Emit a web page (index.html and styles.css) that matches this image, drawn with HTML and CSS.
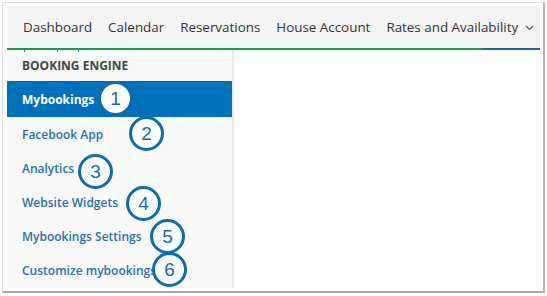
FILE: index.html
```html
<!DOCTYPE html>
<html>
<head>
<meta charset="utf-8">
<link rel="stylesheet" href="styles.css">
</head>
<body>
<div class="frame">
  <nav class="topnav">
    <a class="nav-item">Dashboard</a>
    <a class="nav-item">Calendar</a>
    <a class="nav-item">Reservations</a>
    <a class="nav-item">House Account</a>
    <a class="nav-item">Rates and Availability
      <svg class="chev" width="9" height="6" viewBox="0 0 9 6"><path d="M1 1 L4.5 4.5 L8 1" fill="none" stroke="#555" stroke-width="1.1"/></svg>
    </a>
  </nav>
  <div class="navline"><div class="line-green"></div><div class="line-blue"></div></div>
  <div class="main">
    <aside class="sidebar">
      <div class="cutoff"><span></span><span></span><span></span></div>
      <div class="side-heading">BOOKING ENGINE</div>
      <a class="side-item active">Mybookings</a>
      <a class="side-item">Facebook App</a>
      <a class="side-item">Analytics</a>
      <a class="side-item">Website Widgets</a>
      <a class="side-item">Mybookings Settings</a>
      <a class="side-item">Customize mybookings</a>
    </aside>
    <section class="content"></section>
    <div class="marker m1">1</div>
    <div class="marker m2">2</div>
    <div class="marker m3">3</div>
    <div class="marker m4">4</div>
    <div class="marker m5">5</div>
    <div class="marker m6">6</div>
  </div>
</div>
</body>
</html>
```

FILE: styles.css
```css
* { box-sizing: border-box; }
html, body { margin: 0; padding: 0; background: #fff; }
body { font-family: "Open Sans", "Liberation Sans", sans-serif; }

.frame {
  margin: 2px 0 0 2px;
  width: 543px;
  height: 291px;
  border-left: 1px solid #dcdcdc;
  border-top: 1px solid #e2e2e2;
  border-right: 2px solid #b4b4b4;
  border-bottom: 2px solid #a8a8a8;
  padding: 3px 3px 3px 4px;
  display: flex;
  flex-direction: column;
}

.topnav {
  height: 42px;
  background: #f4f4f4;
  display: flex;
  align-items: center;
  gap: 16px;
  padding-left: 16px;
  font-size: 13.4px;
  color: #333;
}
.nav-item { white-space: nowrap; display: flex; align-items: center; }
.chev { margin-left: 7px; margin-top: 1px; }

.navline { display: flex; height: 2px; }
.line-green { flex: 1; background: #1e9a4b; }
.line-blue { width: 57px; background: #1f63a6; }

.main {
  flex: 1;
  display: flex;
  position: relative;
}
.sidebar {
  width: 227px;
  background: #f9f9f9;
  border-right: 2px solid #e6e9ee;
  display: flex;
  flex-direction: column;
}
.cutoff { height: 2px; position: relative; }
.cutoff span { position: absolute; top: 0; width: 1px; height: 2px; background: #3d7fc0; }
.cutoff span:nth-child(1) { left: 17px; }
.cutoff span:nth-child(2) { left: 50px; }
.cutoff span:nth-child(3) { left: 71px; }

.side-heading {
  height: 29px;
  padding-left: 15px;
  padding-top: 5px;
  font-size: 12px;
  font-weight: 700;
  color: #444;
  line-height: 18px;
}
.side-item {
  height: 34px;
  display: flex;
  align-items: center;
  padding-left: 15px;
  font-size: 12px;
  font-weight: 600;
  color: #2a70b3;
  white-space: nowrap;
}
.side-item.active {
  height: 36px;
  background: #0070ba;
  color: #fff;
  font-weight: 700;
}
.content { flex: 1; background: #fff; }

.marker {
  position: absolute;
  width: 35px;
  height: 35px;
  border: 3px solid #0d6cab;
  border-radius: 50%;
  background: #fff;
  color: #1b67a6;
  font-family: "Liberation Sans", Arial, sans-serif;
  font-size: 19px;
  display: flex;
  align-items: center;
  justify-content: center;
}
.m1 { left: 91px; top: 31px; }
.m2 { left: 122px; top: 66px; }
.m3 { left: 71px; top: 104px; }
.m4 { left: 119px; top: 136px; }
.m5 { left: 143px; top: 169px; }
.m6 { left: 145px; top: 202px; }
```
